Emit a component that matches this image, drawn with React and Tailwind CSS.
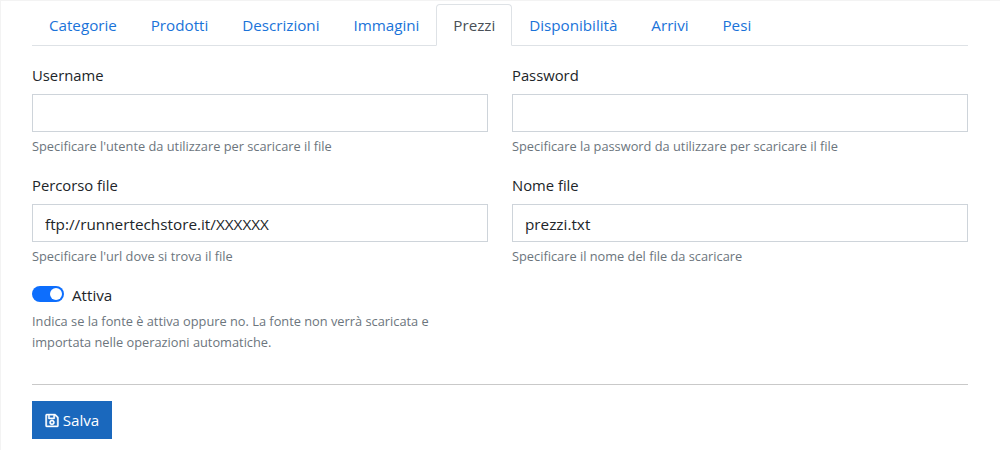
import { FaRegSave } from "react-icons/fa";

const tabs = ["Categorie", "Prodotti", "Descrizioni", "Immagini", "Prezzi", "Disponibilità", "Arrivi", "Pesi"];

function Field({ label, value, help }) {
  return (
    <div>
      <label className="mb-[7px] block text-[14.8px] leading-6 text-[#212529]">{label}</label>
      <input
        readOnly
        value={value || ""}
        className="block h-[38px] w-full border border-[#ced4da] bg-white px-3 pt-[2px] text-[15.3px] text-[#212529] outline-none"
      />
      <p className="mt-1 text-[12.8px] leading-5 text-[#6c757d]">{help}</p>
    </div>
  );
}

export default function App() {
  return (
    <div className="h-[450px] w-[1000px] overflow-hidden border-t border-l border-[#f3f3f3] bg-white pt-[3px] pr-[32px] pl-[31px] font-['Open_Sans',sans-serif]">
      <nav className="flex h-[42px] border-b border-[#dee2e6]">
        {tabs.map((t) => (
          <a
            key={t}
            className={
              t === "Prezzi"
                ? "h-[42px] rounded-t border border-[#dee2e6] border-b-white bg-white px-[15.95px] py-2 text-[15.2px] leading-6 text-[#495057]"
                : "h-[41px] border border-transparent px-[15.95px] py-2 text-[15.2px] leading-6 text-[#1a73d9]"
            }
          >
            {t}
          </a>
        ))}
      </nav>

      <div className="mt-[17px] grid grid-cols-2 gap-x-6 gap-y-[17px]">
        <Field label="Username" help="Specificare l'utente da utilizzare per scaricare il file" />
        <Field label="Password" help="Specificare la password da utilizzare per scaricare il file" />
        <Field label="Percorso file" value="ftp://runnertechstore.it/XXXXXX" help="Specificare l'url dove si trova il file" />
        <Field label="Nome file" value="prezzi.txt" help="Specificare il nome del file da scaricare" />
      </div>

      <div className="mt-5 w-[440px]">
        <div className="flex h-4 items-center gap-2">
          <span className="flex h-4 w-8 items-center justify-end rounded-full bg-[#0d6efd] px-[2px]">
            <span className="h-3 w-3 rounded-full bg-white" />
          </span>
          <span className="pt-[2px] text-[15.2px] leading-6 text-[#212529]">Attiva</span>
        </div>
        <p className="mt-[9px] text-[12.8px] leading-[21px] text-[#6c757d]">
          Indica se la fonte è attiva oppure no. La fonte non verrà scaricata e importata nelle operazioni automatiche.
        </p>
      </div>

      <hr className="mt-[31px] border-t border-[#c9c9c9]" />

      <button className="mt-4 flex h-[38px] w-20 items-center justify-center gap-[4px] bg-[#1a68bd] text-[15.2px] text-white">
        <FaRegSave className="h-[15px] w-[14px] stroke-[12px]" />
        Salva
      </button>
    </div>
  );
}
